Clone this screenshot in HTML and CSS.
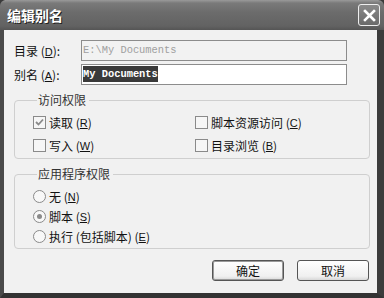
FILE: index.html
```html
<!DOCTYPE html>
<html lang="zh-CN">
  <head>
    <meta charset="UTF-8" />
    <title>编辑别名</title>
    <link rel="stylesheet" href="styles.css">
  </head>
  <body>
    <div class="window">
      <div class="titlebar">
        <span class="title">编辑别名</span>
        <span class="close-btn">
          <svg width="13" height="13" viewBox="0 0 13 13">
            <path d="M2 2 L11 11 M11 2 L2 11" stroke="#fff" stroke-width="2.6" stroke-linecap="square" />
          </svg>
        </span>
      </div>

      <div class="content">
        <div class="field-row">
          <label class="field-label">目录 (<u>D</u>):</label>
          <div class="text-input disabled">E:\My Documents</div>
        </div>
        <div class="field-row">
          <label class="field-label">别名 (<u>A</u>):</label>
          <div class="text-input"><span class="selected">My Documents</span></div>
        </div>

        <!-- 访问权限 -->
        <fieldset class="group group-access">
          <legend>访问权限</legend>
          <div class="check-grid">
            <div class="option"><span class="checkbox checked">
              <svg width="11" height="11" viewBox="0 0 11 11"><path d="M2 5 L4.5 7.5 L9 2.5" fill="none" stroke="#8a8a8a" stroke-width="1.8" /></svg>
            </span>读取 (<u>R</u>)</div>
            <div class="option"><span class="checkbox"></span>脚本资源访问 (<u>C</u>)</div>
            <div class="option"><span class="checkbox"></span>写入 (<u>W</u>)</div>
            <div class="option"><span class="checkbox"></span>目录浏览 (<u>B</u>)</div>
          </div>
        </fieldset>

        <!-- 应用程序权限 -->
        <fieldset class="group group-app">
          <legend>应用程序权限</legend>
          <div class="radio-list">
            <div class="option"><span class="radio"></span>无 (<u>N</u>)</div>
            <div class="option"><span class="radio checked"></span>脚本 (<u>S</u>)</div>
            <div class="option"><span class="radio"></span>执行 (包括脚本) (<u>E</u>)</div>
          </div>
        </fieldset>

        <div class="buttons">
          <button class="btn btn-default">确定</button>
          <button class="btn">取消</button>
        </div>
      </div>
    </div>
  </body>
</html>
```

FILE: styles.css
```css
/* 基本样式 */
* {
  margin: 0;
  padding: 0;
  box-sizing: border-box;
}

body {
  width: 384px;
  height: 298px;
  overflow: hidden;
  background-color: #3a3a3a;
  font-family: "Liberation Sans", "Noto Sans CJK SC", sans-serif;
  font-size: 12px;
  color: #111;
}

.window {
  width: 384px;
  height: 298px;
  background-color: #f1f1f1;
  border-left: 4px solid #4a4a4a;
  border-right: 7px solid #3c3c3c;
  border-bottom: 5px solid #333;
  border-top-left-radius: 6px;
  border-top-right-radius: 6px;
  display: flex;
  flex-direction: column;
}

/* 标题栏 */
.titlebar {
  height: 30px;
  margin: 0 -7px 0 -4px;
  padding: 0 4px 0 7px;
  display: flex;
  align-items: center;
  justify-content: space-between;
  background: linear-gradient(to bottom, #9a9a9a 0, #7a7a7a 3px, #6c6c6c 12px, #626262 26px, #555 30px);
  border-top-left-radius: 6px;
  border-top-right-radius: 6px;
}

.title {
  color: #fff;
  font-family: "Noto Sans CJK SC", sans-serif;
  font-size: 14px;
  font-weight: bold;
  letter-spacing: 0;
  text-shadow: 1px 1px 0 #222;
}

.close-btn {
  width: 22px;
  height: 22px;
  border: 1px solid #eee;
  border-radius: 3px;
  background: linear-gradient(to bottom, #8a8a8a, #6a6a6a);
  display: flex;
  align-items: center;
  justify-content: center;
}

/* 内容区域 */
.content {
  padding: 10px 7px 0 10px;
}

.field-row {
  display: flex;
  align-items: center;
  height: 21px;
  margin-bottom: 3px;
}

.field-label {
  width: 67px;
  font-family: "Noto Sans CJK SC", sans-serif;
}

u {
  font-family: "Liberation Sans", sans-serif;
  font-size: 11px;
}

.text-input {
  width: 266px;
  height: 21px;
  border: 1px solid #8c8c8c;
  background-color: #fff;
  padding: 0 1px;
  font-family: "Liberation Mono", monospace;
  font-size: 10.4px;
  line-height: 19px;
  white-space: nowrap;
}

.text-input.disabled {
  background-color: #f2f2f2;
  color: #a0a0a0;
}

.selected {
  background-color: #3a3a3a;
  color: #fff;
  font-weight: bold;
  padding: 2px 0;
}

/* 分组框 */
.group {
  width: 356px;
  border: 1px solid #cfcfcf;
  border-radius: 4px;
  padding: 0 0 0 18px;
  font-family: "Noto Sans CJK SC", sans-serif;
}

.group legend {
  margin-left: 4px;
  padding: 0 3px 0 1px;
  line-height: 14px;
  color: #333;
}

.group-access {
  margin-top: 8px;
  padding-top: 8px;
  padding-bottom: 5px;
}

.group-app {
  margin-top: 8px;
  padding-top: 8px;
  padding-bottom: 4px;
}

.check-grid {
  display: grid;
  grid-template-columns: 162px 1fr;
  row-gap: 8px;
}

.radio-list {
  display: flex;
  flex-direction: column;
  gap: 5px;
}

.option {
  display: flex;
  align-items: center;
  height: 15px;
  white-space: nowrap;
}

.checkbox {
  width: 13px;
  height: 13px;
  border: 1px solid #8a8a8a;
  background-color: #f6f6f6;
  margin-right: 3px;
  display: flex;
  align-items: center;
  justify-content: center;
}

.radio {
  width: 13px;
  height: 13px;
  border: 1px solid #8a8a8a;
  border-radius: 50%;
  background-color: #f8f8f8;
  margin-right: 3px;
  display: flex;
  align-items: center;
  justify-content: center;
}

.radio.checked::after {
  content: "";
  width: 5px;
  height: 5px;
  border-radius: 50%;
  background-color: #8a8a8a;
}

/* 按钮 */
.buttons {
  display: flex;
  justify-content: flex-end;
  gap: 13px;
  margin-top: 11px;
  padding-right: 1px;
}

.btn {
  width: 72px;
  height: 21px;
  border: 1px solid #555;
  border-radius: 3px;
  background: linear-gradient(to bottom, #fff, #f0f0f0 80%, #d8d8d8);
  font-family: "Noto Sans CJK SC", sans-serif;
  font-size: 12px;
  color: #111;
}

.btn-default {
  box-shadow: inset 0 0 0 1px #9a9a9a;
}
```
